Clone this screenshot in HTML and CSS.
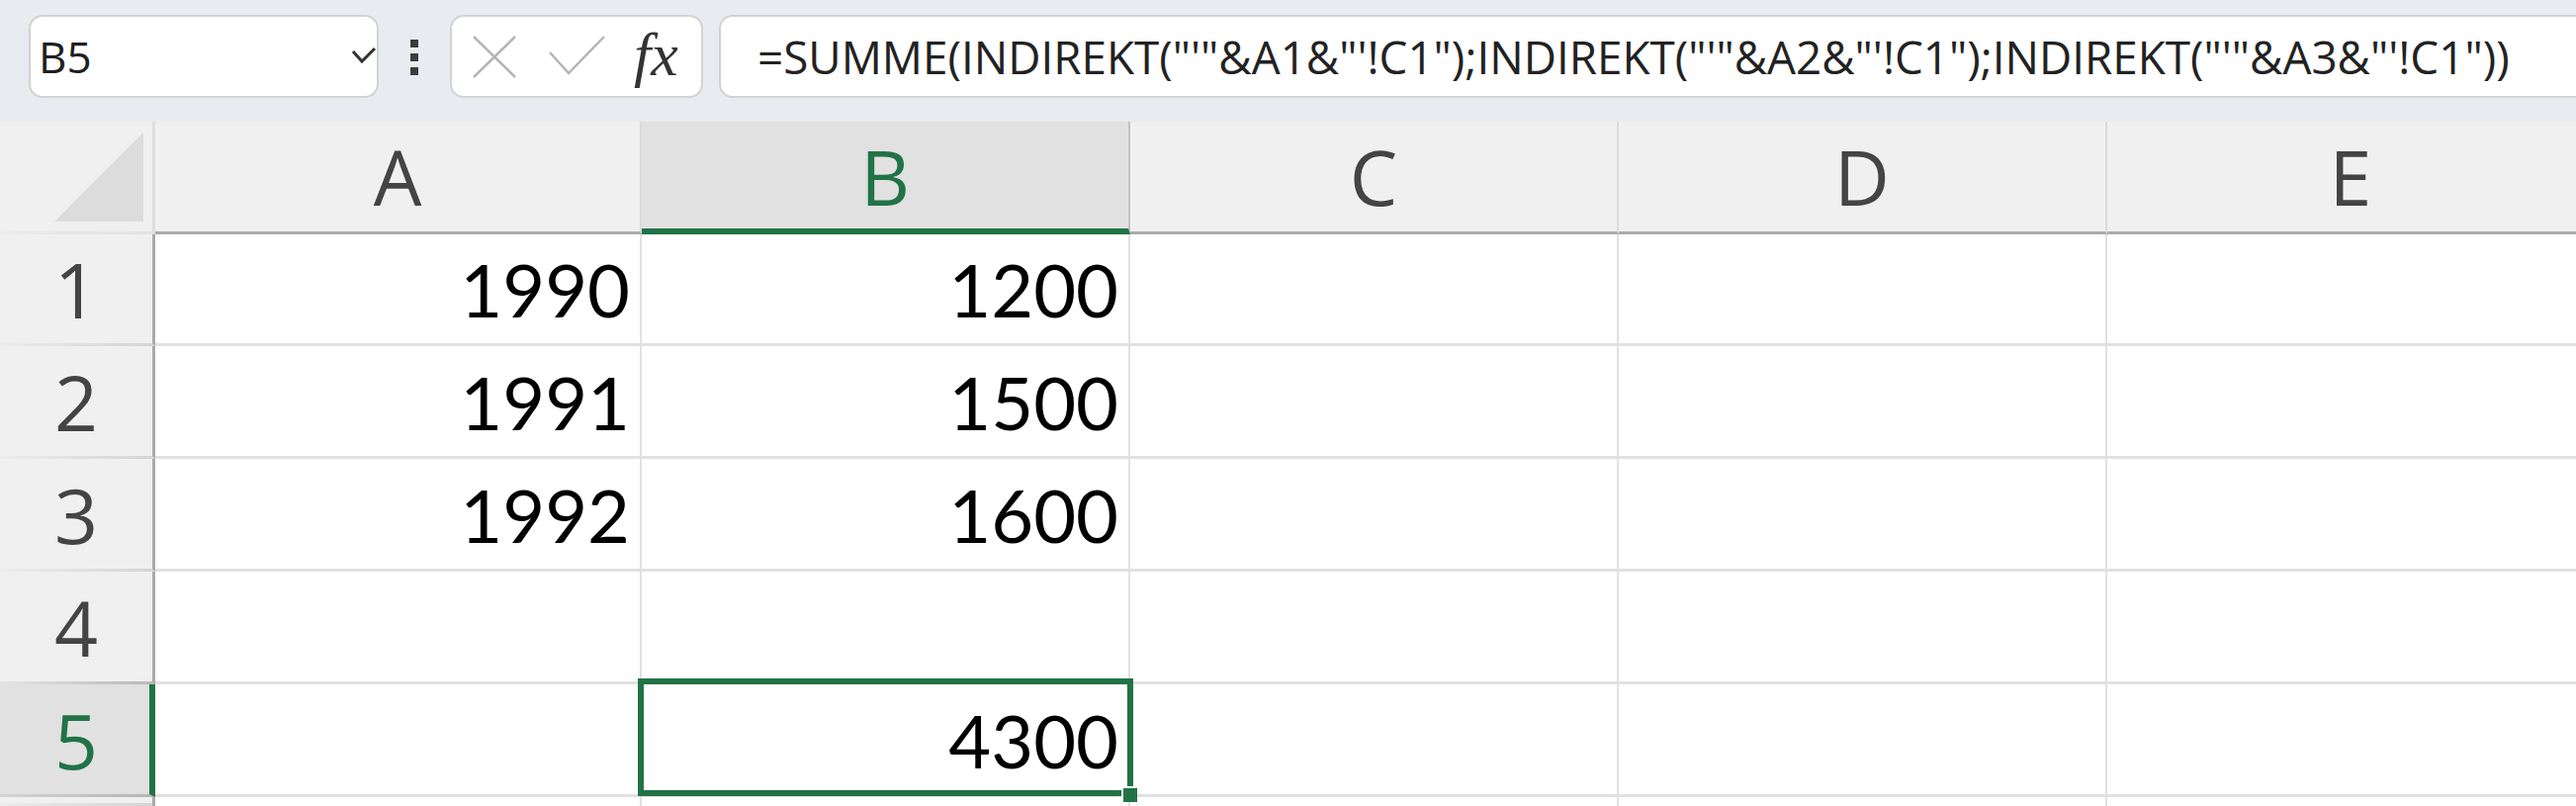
FILE: index.html
```html
<!DOCTYPE html>
<html lang="de">
<head>
  <meta charset="UTF-8" />
  <title>Mappe1 - Excel</title>
  <link rel="stylesheet" href="styles.css">
</head>
<body>

<div class="toolbar">
  <div class="namebox">
    <span class="cellref">B5</span>
    <svg class="chev" width="26" height="22" viewBox="0 0 26 22">
      <polyline points="2,5 11,15 24,2" fill="none" stroke="#333" stroke-width="3" />
    </svg>
  </div>
  <div class="more"><span></span><span></span><span></span></div>
  <div class="fxbox">
    <svg class="btn-cancel" width="44" height="43" viewBox="0 0 44 43">
      <path d="M1 1 L43 42 M43 1 L1 42" stroke="#b4b4b4" stroke-width="2.5" />
    </svg>
    <svg class="btn-enter" width="57" height="40" viewBox="0 0 57 40">
      <polyline points="1,17 20,38 56,1" fill="none" stroke="#b4b4b4" stroke-width="2.5" />
    </svg>
    <span class="fx">fx</span>
  </div>
  <div class="formula">=SUMME(INDIREKT("'"&amp;A1&amp;"'!C1");INDIREKT("'"&amp;A2&amp;"'!C1");INDIREKT("'"&amp;A3&amp;"'!C1"))</div>
</div>

<div class="sheet">
  <div class="corner"><svg width="90" height="90" viewBox="0 0 90 90"><polygon points="90,0 90,90 0,90" fill="#dcdcdc" /></svg></div>
  <div class="colhead">A</div>
  <div class="colhead sel">B</div>
  <div class="colhead">C</div>
  <div class="colhead">D</div>
  <div class="colhead">E</div>

  <div class="rowhead">1</div>
  <div class="cell">1990</div>
  <div class="cell">1200</div>
  <div class="cell"></div>
  <div class="cell"></div>
  <div class="cell"></div>

  <div class="rowhead">2</div>
  <div class="cell">1991</div>
  <div class="cell">1500</div>
  <div class="cell"></div>
  <div class="cell"></div>
  <div class="cell"></div>

  <div class="rowhead">3</div>
  <div class="cell">1992</div>
  <div class="cell">1600</div>
  <div class="cell"></div>
  <div class="cell"></div>
  <div class="cell"></div>

  <div class="rowhead before-sel">4</div>
  <div class="cell"></div>
  <div class="cell"></div>
  <div class="cell"></div>
  <div class="cell"></div>
  <div class="cell"></div>

  <div class="rowhead sel">5</div>
  <div class="cell"></div>
  <div class="cell active">4300<span class="handle"></span></div>
  <div class="cell"></div>
  <div class="cell"></div>
  <div class="cell"></div>

  <!-- row 6, only its top edge shows -->
  <div class="rowhead edge"></div>
  <div class="cell edge"></div>
  <div class="cell edge"></div>
  <div class="cell edge"></div>
  <div class="cell edge"></div>
  <div class="cell edge"></div>
</div>

</body>
</html>
```

FILE: styles.css
```css
body {
  margin: 0;
  padding: 0;
  width: 2605px;
  height: 815px;
  overflow: hidden;
  background: #fff;
  font-family: "Open Sans", "Noto Sans", sans-serif;
}

/* formula bar */
.toolbar {
  height: 123px;
  box-sizing: border-box;
  padding: 15px 0 0 29px;
  display: flex;
  align-items: flex-start;
  background: #e8ecf0;
}
.namebox, .fxbox, .formula {
  height: 84px;
  box-sizing: border-box;
  background: #fff;
  border: 2px solid #d2d2d2;
  border-radius: 14px;
  display: flex;
  align-items: center;
}
.namebox {
  width: 354px;
  padding-left: 8px;
  justify-content: space-between;
}
.cellref {
  font-size: 44px;
  color: #1f1f1f;
}
.chev {
  margin-top: 2px;
}
.more {
  width: 8px;
  margin: 25px 0 0 32px;
  display: flex;
  flex-direction: column;
  gap: 6px;
}
.more span {
  display: block;
  width: 8px;
  height: 8px;
  background: #3c3c3c;
}
.fxbox {
  width: 256px;
  margin-left: 32px;
  padding-left: 21px;
}
.btn-cancel {
  margin-right: 33px;
}
.btn-enter {
  margin-right: 29px;
  margin-top: -2px;
}
.fx {
  font-family: "Liberation Serif", serif;
  font-style: italic;
  font-size: 62px;
  line-height: 1;
  color: #333;
  margin-top: -4px;
}
.formula {
  flex: 1;
  margin-left: 16px;
  margin-right: -30px;
  padding-left: 37px;
  font-size: 45.8px;
  color: #222;
  white-space: nowrap;
}

/* grid */
.sheet {
  display: grid;
  grid-template-columns: 157px 492px repeat(4, 494px);
  grid-template-rows: 114px 113px repeat(4, 114px) 9px;
  height: 692px;
  overflow: hidden;
}
.corner, .colhead, .rowhead, .cell {
  box-sizing: border-box;
}
.corner {
  background: linear-gradient(to right, #ececec, #e2e2e2) bottom / 100% 3px no-repeat, #f0f0f0;
  background-origin: border-box;
  border-right: 3px solid #dedede;
  border-bottom: 3px solid transparent;
  display: flex;
  justify-content: flex-end;
  align-items: flex-end;
  padding: 0 9px 10px 0;
}
.corner svg {
  display: block;
}
.colhead {
  background: #f0f0f0;
  border-right: 2px solid #dadada;
  border-bottom: 3px solid #ababab;
  display: flex;
  align-items: center;
  justify-content: center;
  font-size: 77px;
  line-height: 1;
  color: #444;
}
.colhead.sel {
  background: #e1e1e1;
  color: #217346;
  border-right-color: #c2c2c2;
  border-bottom: 6px solid #217346;
  padding-top: 3px;
}
.rowhead {
  background: linear-gradient(to right, #ececec, #d4d4d4) bottom / 100% 3px no-repeat, #f0f0f0;
  background-origin: border-box;
  border-right: 3px solid #a9a9a9;
  border-bottom: 3px solid transparent;
  display: flex;
  align-items: center;
  justify-content: center;
  font-size: 77px;
  line-height: 1;
  color: #444;
  padding-top: 1px;
}
.rowhead.before-sel {
  background: linear-gradient(to right, #e4e4e4, #b8b8b8) bottom / 100% 3px no-repeat, #f0f0f0;
  background-origin: border-box;
}
.rowhead.sel {
  background: linear-gradient(to right, #d4d4d4, #b4b4b4) bottom / 100% 3px no-repeat, #e1e1e1;
  background-origin: border-box;
  border-right: 6px solid #217346;
  color: #217346;
  padding-left: 3px;
}
.cell {
  background: #fff;
  border-right: 2px solid #e1e1e1;
  border-bottom: 3px solid #e1e1e1;
  display: flex;
  align-items: center;
  justify-content: flex-end;
  padding: 2px 10px 0 0;
  font-family: "Lato", "Liberation Sans", sans-serif;
  font-size: 74px;
  line-height: 1;
  color: #000;
}
.rowhead.edge, .cell.edge {
  border-bottom: 0;
  padding: 0;
}
.cell.active {
  position: relative;
}
.cell.active::before {
  content: "";
  position: absolute;
  left: -4px;
  top: -6px;
  right: -5px;
  bottom: -2px;
  border: 6px solid #217346;
}
.handle {
  position: absolute;
  right: -9px;
  bottom: -8px;
  width: 14px;
  height: 14px;
  background: #217346;
  border: 2px solid #fff;
  border-right: 0;
  border-bottom: 0;
}
```
